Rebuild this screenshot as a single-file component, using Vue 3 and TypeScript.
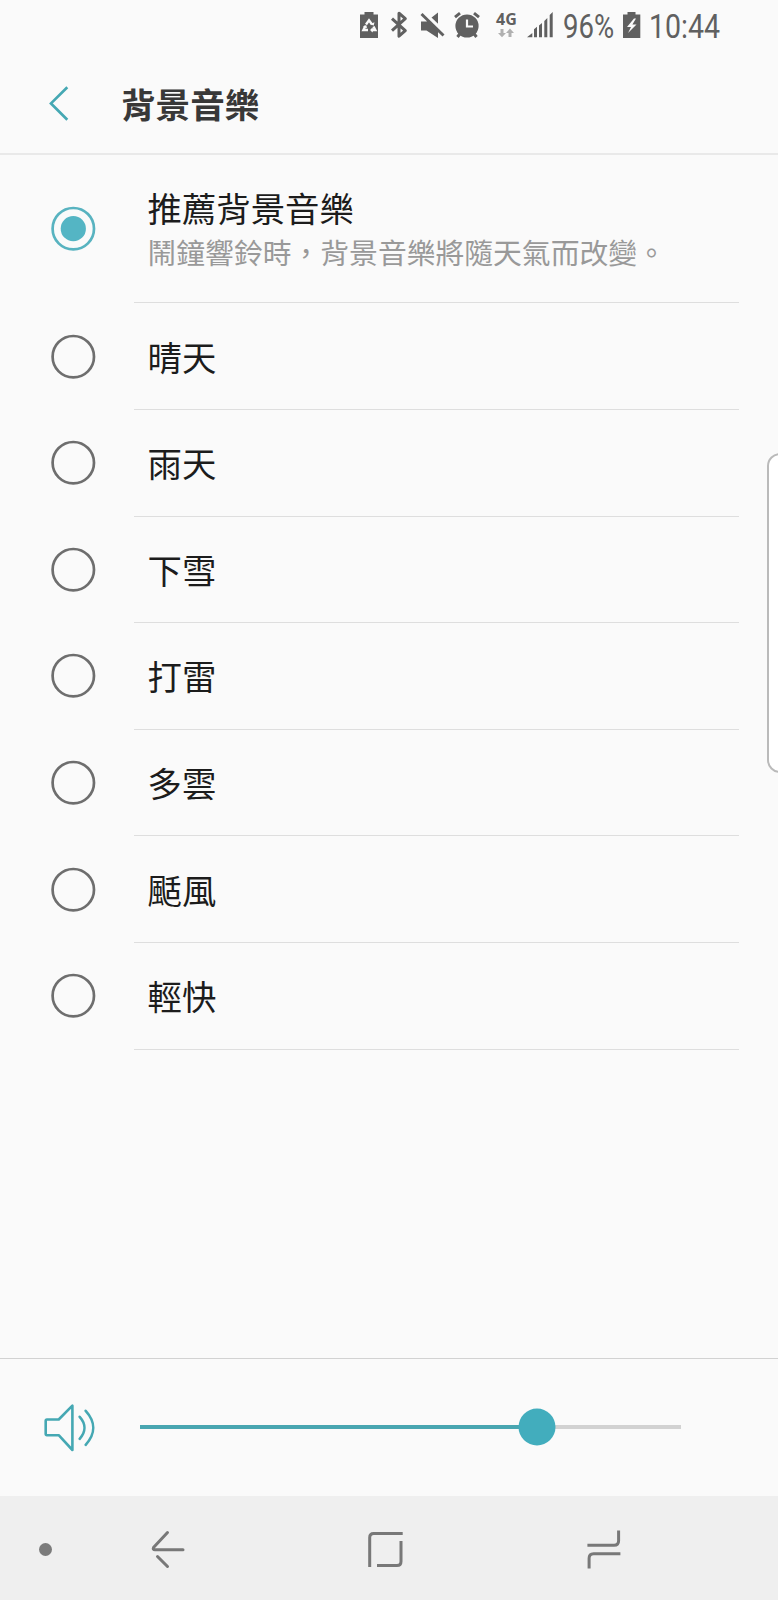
<script setup lang="ts">
import { ref } from 'vue'

interface Track {
  id: string
  label: string
  note?: string
}

const tracks: Track[] = [
  { id: 'auto', label: '推薦背景音樂', note: '鬧鐘響鈴時，背景音樂將隨天氣而改變。' },
  { id: 'sunny', label: '晴天' },
  { id: 'rain', label: '雨天' },
  { id: 'snow', label: '下雪' },
  { id: 'thunder', label: '打雷' },
  { id: 'cloudy', label: '多雲' },
  { id: 'typhoon', label: '颳風' },
  { id: 'lively', label: '輕快' },
]

const selected = ref('auto')
const volume = ref(73.3)
</script>

<template>
  <div class="screen">
    <div class="status">
      <svg class="status-icons" width="204" height="52" viewBox="350 0 204 52">
        <g fill="#606060">
          <path d="M360 14.5h4.5V12h9v2.5h4.5V38h-18z" />
          <g fill="none" stroke="#fafafa" stroke-width="2.4">
            <path d="M366 24.500l3-4.200 3 4.200M373.500 26.500l1.800 3.500h-4.300M368 30h-4.600l1.900-4" />
          </g>
          <path d="M370 30l2.800-2.500v5zM374.500 22.300l-.9 3.500-3-1.700zM363 26.600l3.200-1.600.8 3.300z" fill="#fafafa" />
          <path d="M421 21.500h5.500l11.500-9V38l-11.500-7.500H421z" />
          <path d="M421.500 10.800l24 23" stroke="#fafafa" stroke-width="4" />
          <path d="M421.500 14l22 21.500" stroke="#606060" stroke-width="2.900" />
          <circle cx="467" cy="26" r="11.600" />
          <g fill="none" stroke="#606060" stroke-width="3">
            <path d="M455 17.200l5-4M479 17.200l-5-4M460.500 33l-3 4M473.500 33l3 4" />
          </g>
          <path d="M467 19.500v7h6" fill="none" stroke="#fafafa" stroke-width="2.200" />
          <path d="M527 37.300l5.300-4.300v4.300z" />
          <path d="M534 37.300v-8l3-2.500v10.500zM539 37.300V25.500l3-2.500v14.300zM544.300 37.300V21l3-3v19.300zM549.700 37.300V15l3-3v25.300z" />
        </g>
        <path d="M392 18.700l13.300 12-6.300 5.500v-23l6.300 5.500-13.300 12" fill="none" stroke="#606060" stroke-width="3" stroke-linejoin="round" />
        <text x="496" y="25.300" class="network">4G</text>
        <path d="M500.500 29h3v4h2.500l-4 4.300-4-4.300h2.500zM508.500 37v-4H506l4-4.400 4 4.400h-2.500v4z" fill="#b0b0b0" />
      </svg>
      <span class="figure percent"><span>96%</span></span>
      <svg class="charge" width="18" height="52" viewBox="0 0 18 52">
        <path d="M0 14.500h4.500V12h8v2.500H17.300V38H0z" fill="#606060" />
        <path d="M11 18.500L4 27h4l-3 6 8.500-8.500H9.400l3.600-6z" fill="#fafafa" />
      </svg>
      <span class="figure clock"><span>10:44</span></span>
    </div>

    <header class="header">
      <svg width="20" height="36" viewBox="0 0 20 36">
        <path d="M18.300 2.200L2 18.400l16.300 16.300" fill="none" stroke="#45a8b3" stroke-width="2.700" />
      </svg>
      <h1>背景音樂</h1>
    </header>

    <main class="list">
      <div
        v-for="track in tracks"
        :key="track.id"
        class="row"
        :class="{ tall: track.note }"
        @click="selected = track.id"
      >
        <svg class="radio" :class="{ on: selected === track.id }" width="46" height="46" viewBox="0 0 46 46">
          <circle class="ring" cx="23.300" cy="22.700" r="20.700" />
          <circle v-if="selected === track.id" class="core" cx="23.300" cy="22.700" r="12.600" />
        </svg>
        <div class="text">
          <div class="label">{{ track.label }}</div>
          <div v-if="track.note" class="note">{{ track.note }}</div>
        </div>
      </div>
    </main>

    <section class="volume">
      <svg width="52" height="50" viewBox="0 0 52 50" fill="none" stroke="#45a8b3" stroke-width="2.600" stroke-linejoin="round" stroke-linecap="round">
        <path d="M1.700 18.700Q1.700 17.500 2.900 17.500H14.700L28.400 3.700v44.300L14.700 33.200H2.900Q1.700 33.200 1.700 32z" />
        <path d="M35.700 14.800c6.300 7 6.300 15 0 22M41.700 8.800c10 11 10 23 0 34" />
      </svg>
      <div class="track">
        <div class="fill" :style="{ width: volume + '%' }"></div>
        <div class="thumb" :style="{ left: volume + '%' }"></div>
      </div>
    </section>

    <nav class="nav">
      <span class="dot"></span>
      <svg class="nav-back" width="36" height="40" viewBox="0 0 36 40" fill="none" stroke="#787878" stroke-width="3" stroke-linecap="round" stroke-linejoin="round">
        <path d="M17.500 2.500L3.500 17.500Q2.500 19.700 5 19.700H33" />
        <path d="M7.500 26.500l10 10" />
      </svg>
      <svg class="nav-home" width="36" height="40" viewBox="0 0 36 40" fill="none" stroke="#787878" stroke-width="3">
        <path d="M1.700 37V7.500Q1.700 3.500 5.700 3.500H34.700" />
        <path d="M33 11v20.500q0 4-4 4H9" />
      </svg>
      <svg class="nav-recents" width="36" height="40" viewBox="0 0 36 40" fill="none" stroke="#787878" stroke-width="3">
        <path d="M1.400 15.200h26.700q4.500 0 4.500-4.500V.5" />
        <path d="M34.400 23.700H7.600q-4.500 0-4.500 4.500V38.500" />
      </svg>
    </nav>

    <div class="edge-handle"></div>
  </div>
</template>

<style>
body {
  background: #fafafa;
}
</style>

<style scoped>
.screen {
  position: relative;
  display: flex;
  flex-direction: column;
  width: 778px;
  height: 1600px;
  overflow: hidden;
  background: #fafafa;
  font-family: Roboto, "Noto Sans CJK TC", sans-serif;
}
.status {
  display: flex;
  height: 52px;
  padding-left: 350px;
}
.status-icons {
  flex: none;
}
.network {
  font: 700 16px "Open Sans", sans-serif;
  fill: #606060;
}
.figure {
  flex: none;
  font-size: 33px;
  line-height: 53px;
  color: #606060;
}
.figure span {
  display: inline-block;
  transform: scaleX(0.835);
  transform-origin: 0 50%;
}
.figure.clock span {
  transform: scaleX(0.865);
}
.percent {
  width: 60px;
  margin-left: 8.5px;
}
.charge {
  flex: none;
  margin-left: 0.5px;
}
.clock {
  width: 80px;
  margin-left: 7.500px;
}
.header {
  display: flex;
  flex: none;
  align-items: center;
  height: 101px;
  padding-left: 48.500px;
  border-bottom: 2px solid #e9e9e9;
}
h1 {
  margin: 6px 0 0 52.500px;
  font-size: 34.600px;
  line-height: 50px;
  font-weight: 700;
  color: #383838;
}
.row {
  display: flex;
  align-items: center;
  height: 106.667px;
  padding-left: 50px;
}
.row.tall {
  height: 148.200px;
}
.radio {
  flex: none;
}
.ring {
  fill: none;
  stroke: #6e6e6e;
  stroke-width: 2.7px;
}
.on .ring {
  stroke: #58b3c0;
}
.core {
  fill: #54b5c4;
}
.text {
  display: flex;
  flex-direction: column;
  justify-content: center;
  box-sizing: border-box;
  width: 605px;
  height: 100%;
  margin-left: 38px;
  padding-left: 13.500px;
  padding-top: 5px;
  border-bottom: 1px solid #dedede;
}
.label {
  font-size: 34.400px;
  line-height: 46px;
  color: #1c1c1c;
}
.note {
  font-size: 28.800px;
  line-height: 42px;
  color: #999;
  white-space: nowrap;
}
.volume {
  display: flex;
  align-items: center;
  box-sizing: border-box;
  height: 138px;
  margin-top: auto;
  padding: 0 0 2px 44px;
  border-top: 1px solid #d2d2d2;
}
.track {
  position: relative;
  width: 541px;
  height: 4px;
  margin-left: 44px;
  background: #d2d2d2;
}
.fill {
  height: 4px;
  background: #49a6b1;
}
.thumb {
  position: absolute;
  top: 50%;
  width: 37px;
  height: 37px;
  border-radius: 50%;
  background: #42adbd;
  transform: translate(-50%, -50%);
}
.nav {
  display: flex;
  flex: none;
  align-items: center;
  box-sizing: border-box;
  height: 104px;
  padding: 4px 0 0 39px;
  background: #efefef;
}
.dot {
  width: 13px;
  height: 13px;
  margin-top: -1px;
  border-radius: 50%;
  background: #7b7b7b;
}
.nav-back {
  margin-left: 98px;
}
.nav-home {
  margin-left: 182px;
}
.nav-recents {
  margin-left: 182px;
}
.edge-handle {
  position: absolute;
  top: 453px;
  left: 767px;
  box-sizing: border-box;
  width: 30px;
  height: 320px;
  border: 2px solid #bababa;
  border-radius: 13px;
  background: #fff;
}
</style>
